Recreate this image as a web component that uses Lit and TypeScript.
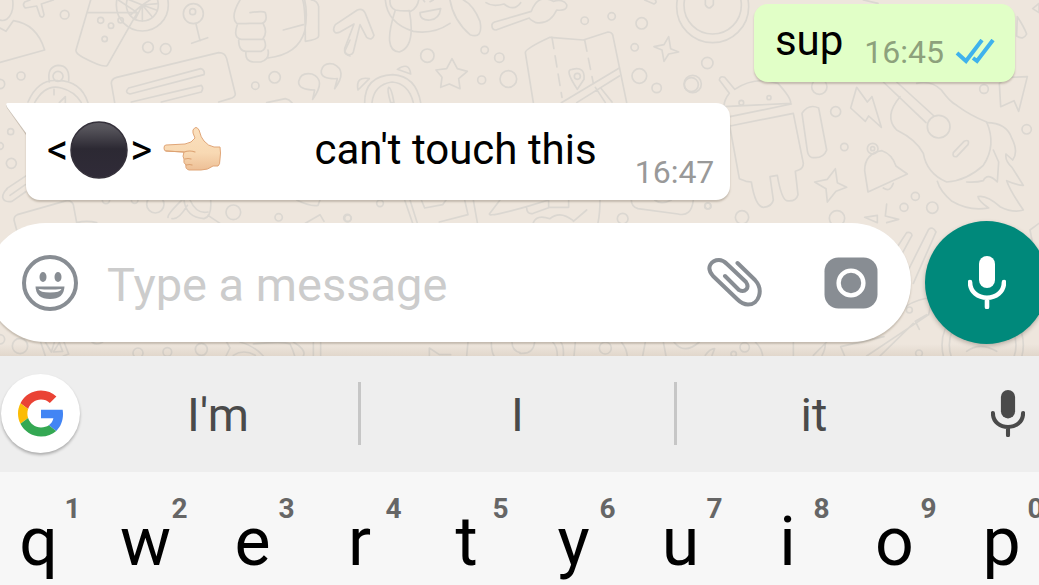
import { LitElement, html, css, svg } from "lit";
import { customElement, property } from "lit/decorators.js";

const SUGGESTIONS = ["I'm", "I", "it"];
const KEYS = ["q", "w", "e", "r", "t", "y", "u", "i", "o", "p"];

const dots = (list: number[][]) =>
  list.map(([x, y, r]) => svg`<circle cx=${x} cy=${y} r=${r} />`);

@customElement("chat-wallpaper")
class ChatWallpaper extends LitElement {
  static styles = css`
    :host { display: block; overflow: hidden; background: #eee6dd; }
    svg { display: block; }
    .lines { fill: none; stroke: #dbd7d1; stroke-width: 5; stroke-linecap: round; stroke-linejoin: round; }
  `;

  render() {
    return html`
      <svg width="1039" height="356" viewBox="0 0 3117 1068" aria-hidden="true">
        <g class="lines">
          <g>
            ${dots([[194, 44, 13], [302, 61, 9], [333, 77, 8], [362, 61, 8], [314, 117, 8], [580, 41, 30], [578, 35, 9], [444, 142, 16], [497, 147, 16], [63, 228, 12], [0, 252, 14], [174, 229, 15], [766, 257, 11], [824, 232, 17], [427, 15, 48], [427, 15, 78]])}
            <path d="M38 0q5 40-18 58q-10 6-20 2M90 0l-16 6q-8 10 2 18l34-6l10 30q10 8 12-4l-8-32l36-12" />
            <path d="M0 84l18 10l22-32q70 10 94 88L0 187" />
            <path d="M272 0l-44 150q-2 10 20 22q64 34 74 24L412 38L355 0M263 38h149M427 15l-36 30M427 15v48M427 15l30 36M427 15l44 16M427 15l-22 44M427 15l30-20M427 15l-40-16M427 15l46-4" />
            <path d="M588 72l12 50M575 130l48-17" />
            <path d="M720 0q-30 50-10 70q12 2 40 0h36q18-6 10-32q-6-6-46 0M712 74q-14 40 12 44h64q16-20 2-46M716 120q0 34 22 34h46q20-10 8-36M738 154q-4 30 22 32h22q28-8 22-36M804 174q90-10 110-80q10-54 0-94M850 90l60-16M908 0q8 20 8 124q40-6 40-16V20q-4-18-22-20" />
            <path d="M148 246q-8-46 26-50q36 0 32 46M84 306q30-70 90-64q68 0 90 66M104 308q32-58 80-44q40 10 60 44M162 268v16M178 308l18-18v18" />
            <path d="M344 308l-10-58q0-14 16-18l306-74q20 0 24 18l26 106q0 10-16 14l-34 10M386 264l216-58q14 4 10 18l-222 58q-18-4-4-18M394 306l210-50q8 8 0 20l-120 30M800 308l56-12q12 2 20 12" />
            <path d="M938 298l6-28q-50 0-48-26q6-28 40-22q44 18 2 76M1004 266l8-30q-52 2-48-24q6-26 36-20q44 20 4 74" />
            <path d="M1050 120l-16 34q0 10 16 14" />
          </g>
          <g transform="translate(1020 0)">
            ${dots([[262, 167, 20], [434, 150, 11], [478, 173, 14], [425, 240, 12], [505, 237, 25], [734, 62, 11], [815, 49, 11], [905, 70, 17], [884, 142, 11], [898, 228, 22], [950, 264, 14], [712, 229, 9], [1058, 252, 26]])}
            <path d="M0 96l42-24L14 146q-2 14 10 18q12 2 16-8L60 74l20 38q16 12 22-6L76 40q-8-16-24-10L-14 74q-10 16 0 24q6 2 14-2" />
            <path d="M136 0q6 70 84 94q60 10 110-24M166 30q-40 124 12 126q50-16 30-124q-20 2-42-2q-18-8-16-30M212 34q20-10 24-34M330 0q10 60 60 104q40 14 30-40q-20-50-50-64M240 38q0 24 30 22q28-2 32-34zM250 0l4 5M280 0l-10 5" />
            <path d="M438 8q20 14 54 4q30 24 50-4M464 66l110-32q20-54 66-30q30-8 40 10q4 20-30 16q-20 44-62 38q-20-10-20-14l-100 36q-12 0-12-12q-2-8 8-12" />
            <path d="M336 176l16 30l30 8l-26 22l4 30l-32-14l-26 10l4-30l-18-22l32-4z" />
            <path d="M580 308L556 158q0-12 74-46l100 8l74-24q10 0 14 8l42 204" />
            <path d="M636 112l30 180M734 120l26 130" stroke-dasharray="34 22" />
            <path d="M712 268q-40-60-16-60q40-10 36 30zM664 308l174-104M710 308l128-80M766 262l30 46M784 266l32 40" />
            <path d="M986 110l6 36l24 10l-30 6l-14 22l-6-34l-24-10l30-6z" />
            <path d="M74 308q0-80 84-84q70 4 84 84M96 308q6-54 60-62q50 4 64 62M146 262q8 0 16 46h-10q-12-40-6-46M54 270q-8-42 34-34zM172 208q36-24 40 14z" />
            <path d="M914 0l28 12q10-4 4-12" />
          </g>
          <g transform="translate(2040 0)">
            ${dots([[82, 189, 17], [34, 254, 21], [418, 260, 23], [467, 335, 15], [493, 441, 11], [184, 308, 7], [267, 293, 6], [578, 446, 16], [578, 446, 6], [776, 380, 34], [912, 267, 13], [1040, 388, 14], [706, 589, 12], [757, 623, 17], [672, 622, 12], [186, 652, 20], [471, 655, 23], [83, 618, 9], [98, 16, 86], [98, 20, 108]])}
            <path d="M76 0v14q10 20 24 0V0M550 0l44 10" />
            <path d="M132 320q0-20 16-40l-30-40q2-14 16-8l30 36q60-40 130-18q40 44 38 60zM150 350l184-38M150 378l190-38l30 150q0 16-14 20l-10 4l8 70q-6 22-34 18q-16-6-28-76l-22 4l10 70q-4 20-30 22q-24-2-36-76l-16-2l-20-8l-30-164" />
            <path d="M366 340q20-30 50-16l24 126q-10 28-46 22q-10-4-12-20z" />
            <path d="M530 262l-18 62l44 40l10-16l38 34l-28-92l-14 16zM982 232l-24 18l4 70l40-18l14 32l26-104z" />
            <path d="M564 576l-10-64q0-52 52-60q30 10 42 46l34 24zM610 564q20 14 30-14" />
            <path d="M610 246l128 122M650 246l112 102M660 290q-50 60-10 100q60 30 80 70q10 60 70 86q60-4 110-50q40-60 10-130q-50-20-90-50q-20-10-46-46q-30-30-74-20M820 458l32-34q18-8 12 10l-34 36q-14 2-10-12" />
            <path d="M920 368q60 0 76 48q20 40 2 64l-20-18q-4 20 18 40l34 54q-18 0-50-14q10 30 50 88q-30 10-70-10q-40-36-66-30q2 14 32 34q-60 10-110-20q-36-30-44-60M940 450l16 36l-4 60q-30-30-42-4q-20 6-50 4" />
            <path d="M466 506l6 42l28 14l-32 12l-26 32l-4-40l-34-20l38-8zM620 612l-4 36l40 10l-36 10M592 668l-38-16l38-6z" />
            <path d="M1012 50q20 30 28 52q-10 20-30 6zM1058 26l19-16v28z" />
          </g>
          <g transform="translate(0 270)">
            ${dots([[32, 125, 9], [34, 220, 15], [0, 168, 10], [466, 343, 26], [700, 367, 22], [836, 382, 11], [318, 330, 11], [404, 330, 10], [1042, 384, 11]])}
            <path d="M20 296l60-40M76 306l-40 28q-24 4-28-12q0-14 14-26M30 316l46-32M50 420l-8-30q0-12 10-16l148-42q14-2 20 12l10 54q30-8 60 0" />
            <path d="M504 382q-2-10 46-56M516 386q20 4 46-40M552 330q6 52 60 56q24-6 20-56M570 330q20 44 54 36M624 376l36 24M890 330q40 20 64 16l6-16M916 400l44-26l12 20" />
          </g>
          <g transform="translate(1020 570)">
            ${dots([[120, 40, 10], [24, 85, 10], [848, 86, 16], [1104, 48, 9]])}
            <path d="M194 30l24 70M210 30l22 70M244 30l10 24l54-10l10-14M374 30l10 44l-86 22M400 30l12 68M480 30l-32 42q0 10 112-22l66-20v22h60v-22M560 54q0 20 20 16l50-18M780 30q0 40-6 68M580 98q10-26 50-12q30-26 70 6M740 60l-40 34M874 30q0 20 20 26l120 16q40 10 46-42M944 30q20 16 50 0" />
          </g>
          <g transform="translate(0 990)">
            ${dots([[60, 48, 23], [0, 28, 14], [414, 69, 15], [502, 66, 13], [604, 58, 18]])}
            <path d="M120 30l16 48M136 36l18 30l10-32M160 66l18-28l10 26zM192 36l14 36l-16 6M276 36q14 12 32 0M680 36l10 18l-12 24M700 76q30-20 66 0M720 36q40 10 70 42M760 42q90-10 110 0q10 20 14 36M880 36q40 24 30 42M940 36v42M962 36v42M1288 78v-24l30 20h34M1404 36l-4 42M1474 36q0 30 8 42M1536 36q0 26 24 32" />
          </g>
          <g transform="translate(1560 990)">
            ${dots([[256, 54, 18], [674, 52, 14], [641, 72, 8], [1197, 70, 10]])}
            <path d="M0 70q40 4 44-34M98 36q14 14 14 42M122 36q10 10 8 42M166 36l-4 42M304 36q16 20 18 42M376 36l-8 42M430 36l8 42M462 36q30 40 76 0M556 76q14-20 28-20l-8 20M706 36q20 20 22 42M820 36v42M920 36l-40 40M916 40q0 20-10 36" />
          </g>
          <g transform="translate(2040 630)">
            ${dots([[688, 300, 9], [908, 405, 122], [908, 405, 100]])}
            <path d="M630 144l50-76q14-4 16 8l-54 100M700 220l68-154q-10-18-22-8l-70 140M676 290q40-26 80-26l-10 50L560 438M740 314l-34 20l12 24M700 340L600 438M482 410l12 28M482 410l130-30M860 424q40-30 90 0M1050 60l27-20M1050 60l8 40" />
          </g>
        </g>
      </svg>
    `;
  }
}

@customElement("message-bubble")
class MessageBubble extends LitElement {
  @property() time = "";
  @property({ type: Boolean, reflect: true }) mine = false;

  static styles = css`
    :host { display: flex; color: #000; }
    :host([mine]) { justify-content: flex-end; }
    .bubble {
      position: relative;
      display: flex;
      align-items: flex-start;
      background: #fff;
      border-radius: 0 14px 14px 14px;
      padding: 18px 16px 9px 21px;
      box-shadow: 0 2px 2px rgba(90, 75, 55, 0.28);
    }
    :host([mine]) .bubble { background: #e1ffc7; border-radius: 14px; padding: 12px 20px 11px 21px; }
    .text { font-size: 42px; line-height: 49px; white-space: pre; }
    .meta {
      display: flex;
      align-items: center;
      gap: 11px;
      margin-left: 38px;
      padding-top: 32px;
      font-size: 32px;
      line-height: 38px;
      color: #999;
    }
    :host([mine]) .meta { padding-top: 17px; margin-left: 21px; color: #8da17c; }
    .tail { position: absolute; left: -20px; top: 0; }
  `;

  render() {
    return html`
      <div class="bubble">
        ${this.mine
          ? null
          : html`<svg class="tail" width="20" height="32" viewBox="0 0 20 32" aria-hidden="true">
              <path d="M2 1H20V32L1 5Q-1 1 2 1Z" fill="#5a4b37" fill-opacity="0.25" />
              <path d="M2 0H20V30L1 4Q-1 0 2 0Z" fill="#fff" />
            </svg>`}
        <span class="text"><slot></slot></span>
        <span class="meta">
          <time>${this.time}</time>
          ${this.mine
            ? html`<svg width="40" height="26" viewBox="0 0 40 26" role="img" aria-label="Read">
                <g fill="none" stroke="#3fb2ec" stroke-width="4">
                  <path d="M2 14L11 22L27 1" />
                  <path d="M18 19L22 22L38 1" />
                </g>
              </svg>`
            : null}
        </span>
      </div>
    `;
  }
}

@customElement("app-root")
class AppRoot extends LitElement {
  static styles = css`
    :host {
      display: flex;
      flex-direction: column;
      height: 100vh;
      overflow: hidden;
      font-family: Roboto, "Noto Sans", sans-serif;
      background: #f7f7f7;
    }
    button {
      display: flex;
      align-items: center;
      justify-content: center;
      margin: 0;
      padding: 0;
      border: 0;
      background: none;
      font-family: inherit;
      color: inherit;
    }
    svg { flex: none; }
    .chat { position: relative; z-index: 0; overflow: hidden; padding-bottom: 12px; }
    .chat::after {
      content: "";
      position: absolute;
      inset: auto 0 0 0;
      height: 12px;
      background: linear-gradient(transparent, rgba(110, 80, 50, 0.1));
      z-index: -1;
    }
    chat-wallpaper { position: absolute; inset: 0; z-index: -2; }
    .messages { display: flex; flex-direction: column; gap: 21px; padding: 4px 24px 21px 26px; }
    .composer { display: flex; align-items: center; gap: 14px; margin: 0 -9px 0 -14px; }
    .field {
      flex: 1;
      min-width: 0;
      display: flex;
      align-items: center;
      height: 119px;
      padding: 0 33px 0 35px;
      box-sizing: border-box;
      border-radius: 60px;
      background: #fff;
      color: #888d93;
      box-shadow: 0 2px 2px rgba(90, 75, 55, 0.28);
    }
    .field input {
      flex: 1;
      min-width: 0;
      margin: 0 28px;
      padding: 5px 0 0;
      border: 0;
      outline: 0;
      background: none;
      font-family: inherit;
      font-size: 47px;
      line-height: 54px;
      color: #000;
    }
    .field input::placeholder { color: #ccc; opacity: 1; }
    .camera { margin-left: 61px; }
    .record {
      flex: none;
      width: 123px;
      height: 123px;
      border-radius: 50%;
      background: #00897b;
      color: #fff;
      box-shadow: 0 2px 4px rgba(60, 50, 40, 0.3);
    }
    .strip {
      flex: none;
      box-sizing: border-box;
      display: grid;
      grid-template-columns: 78px 283fr 316fr 277fr 85px;
      align-items: center;
      height: 116px;
      padding-bottom: 2px;
      background: #eee;
      color: #4a4a4a;
    }
    .google {
      width: 79px;
      height: 79px;
      margin-left: 1px;
      border-radius: 50%;
      background: #fff;
      box-shadow: 0 2px 3px rgba(0, 0, 0, 0.28);
    }
    .word { height: 63px; font-size: 47px; line-height: 54px; padding-top: 4px; border-right: 3px solid #c6c6c6; }
    .word.last { border-color: transparent; }
    .dictate { padding-left: 23px; }
    .keys { display: grid; grid-template-columns: repeat(10, 1fr); margin: 0 -16px 0 -15px; padding-top: 20px; }
    .key { flex-direction: column; color: #000; }
    .hint { padding-left: 68px; font-size: 28px; line-height: 33px; font-weight: 700; color: #666; }
    .letter { font-size: 68px; line-height: 34px; }
    .emoji { vertical-align: -15px; }
    .ball { margin: 0 2px; }
  `;

  private mic(width: number, height: number) {
    return html`<svg width=${width} height=${height} viewBox="0 0 38 53" aria-hidden="true">
      <rect x="11" y="0" width="16" height="32" rx="8" fill="currentColor" />
      <path d="M2 26C2 47 36 47 36 26M19 42V51" fill="none" stroke="currentColor" stroke-width="4.6" stroke-linecap="round" />
    </svg>`;
  }

  private ball() {
    return html`<svg class="emoji ball" width="58" height="58" viewBox="0 0 58 58" role="img" aria-label="black circle">
      <defs>
        <linearGradient id="ball" x1="0" y1="0" x2="0" y2="1">
          <stop offset="0" stop-color="#5c5a61" />
          <stop offset="0.12" stop-color="#55535a" />
          <stop offset="0.48" stop-color="#2c2933" />
          <stop offset="1" stop-color="#302b38" />
        </linearGradient>
      </defs>
      <circle cx="29" cy="29" r="28" fill="url(#ball)" stroke="#34303a" stroke-width="1.5" />
    </svg>`;
  }

  private hand() {
    return html`<svg class="emoji" width="58" height="58" viewBox="0 0 58 58" role="img" aria-label="pointing left">
      <defs>
        <linearGradient id="skin" x1="0" y1="0" x2="0" y2="1">
          <stop offset="0" stop-color="#fbe0bd" />
          <stop offset="0.6" stop-color="#f8d9b3" />
          <stop offset="1" stop-color="#edbf96" />
        </linearGradient>
      </defs>
      <path d="M3 24L22 23Q29 22 32 17Q29 11 30 9Q33 4 36 9Q38 17 41 20Q45 25 51 26H57Q58 32 57 38Q57 44 55 45H50Q45 49 38 49H26Q22 48 23 44Q20 42 21 38Q19 36 21 31L3 30Q1 30 1 27Q1 24 3 24Z" fill="url(#skin)" stroke="#e0a577" stroke-width="1" />
      <path d="M21 31Q27 29 32 31M22 38Q25 37 28 38M23 44Q27 43 29 44M3 30L20 31" fill="none" stroke="#dca272" stroke-width="1.2" stroke-linecap="round" />
    </svg>`;
  }

  render() {
    return html`
      <main class="chat">
        <chat-wallpaper></chat-wallpaper>
        <section class="messages">
          <message-bubble mine time="16:45">sup</message-bubble>
          <message-bubble time="16:47">&lt;${this.ball()}&gt; ${this.hand()}${" ".repeat(9)}can't touch this</message-bubble>
        </section>
        <div class="composer">
          <div class="field">
            <button aria-label="Emoji">
              <svg width="58" height="56" viewBox="0 0 58 56" aria-hidden="true">
                <circle cx="29" cy="28" r="26" fill="none" stroke="currentColor" stroke-width="4" />
                <ellipse cx="22" cy="22" rx="3.5" ry="5" fill="currentColor" />
                <ellipse cx="37" cy="22" rx="3.5" ry="5" fill="currentColor" />
                <path d="M14.500 31.500H43.500Q43 44 29 44Q15 44 14.500 31.500Z" fill="currentColor" />
                <path d="M17.500 34Q29 35 40.500 34Q39 37.500 29 37.500Q19 37.500 17.500 34Z" fill="#fff" />
              </svg>
            </button>
            <input type="text" aria-label="Message" placeholder="Type a message" />
            <button aria-label="Attach">
              <svg width="56" height="50" viewBox="0 0 56 50" aria-hidden="true">
                <path d="M30.500 5L48 22C57 32 52 46.500 41 46.500C36 46.500 33 44 30 41L6 18C-2 9 5 2 12 2C15 2 18 4 20 6L39 24C43 30 38 35 32 32L18 18" fill="none" stroke="currentColor" stroke-width="4" stroke-linecap="round" stroke-linejoin="round" />
              </svg>
            </button>
            <button class="camera" aria-label="Camera">
              <svg width="54" height="52" viewBox="0 0 54 52" aria-hidden="true">
                <rect x="0.500" y="0.500" width="53" height="51" rx="14" fill="currentColor" />
                <circle cx="27" cy="26" r="12.400" fill="none" stroke="#fff" stroke-width="4.400" />
              </svg>
            </button>
          </div>
          <button class="record" aria-label="Record voice message">${this.mic(38, 53)}</button>
        </div>
      </main>
      <section class="strip" aria-label="Suggestions">
        <button class="google" aria-label="Google search">
          <svg width="46" height="47" viewBox="0 0 48 48" aria-hidden="true">
            <path fill="#EA4335" d="M24 9.500c3.540 0 6.710 1.220 9.210 3.600l6.850-6.850C35.900 2.380 30.470 0 24 0 14.620 0 6.510 5.380 2.560 13.220l7.980 6.190C12.430 13.720 17.740 9.500 24 9.500z" />
            <path fill="#4285F4" d="M46.980 24.550c0-1.570-.15-3.090-.38-4.550H24v9.020h12.940c-.58 2.960-2.260 5.480-4.780 7.180l7.730 6c4.510-4.180 7.090-10.360 7.090-17.650z" />
            <path fill="#FBBC05" d="M10.530 28.590c-.48-1.450-.76-2.990-.76-4.590s.27-3.140.76-4.590l-7.980-6.190C.92 16.460 0 20.120 0 24s.92 7.540 2.560 10.780l7.970-6.190z" />
            <path fill="#34A853" d="M24 48c6.480 0 11.930-2.130 15.890-5.810l-7.730-6c-2.150 1.450-4.920 2.300-8.160 2.300-6.260 0-11.570-4.220-13.470-9.910l-7.980 6.190C6.510 42.620 14.620 48 24 48z" />
          </svg>
        </button>
        ${SUGGESTIONS.map(
          (word, i) => html`<button class="word ${i === SUGGESTIONS.length - 1 ? "last" : ""}">${word}</button>`
        )}
        <button class="dictate" aria-label="Dictate">${this.mic(34, 47)}</button>
      </section>
      <section class="keys" aria-label="Keyboard">
        ${KEYS.map(
          (key, i) => html`<button class="key"><span class="hint">${(i + 1) % 10}</span><span class="letter">${key}</span></button>`
        )}
      </section>
    `;
  }
}
